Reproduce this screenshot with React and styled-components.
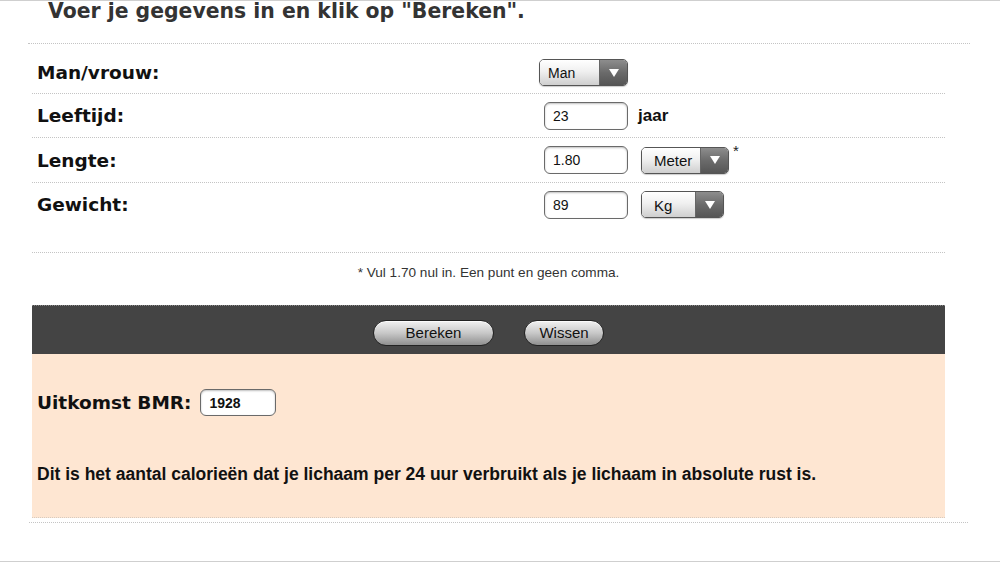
import styled, { createGlobalStyle } from 'styled-components';

const GlobalStyle = createGlobalStyle`
  html, body {
    margin: 0;
    padding: 0;
    background: #fff;
  }
  body {
    font-family: "Liberation Sans", Arial, sans-serif;
    color: #111;
  }
`;

const Page = styled.div`
  box-sizing: border-box;
  width: 1000px;
  height: 562px;
  border-top: 1px solid #cfcfcf;
  border-bottom: 1px solid #cfcfcf;
  overflow: hidden;
  display: flex;
  flex-direction: column;
`;

const Header = styled.div`
  margin-left: 28px;
  width: 942px;
  height: 42px;
  border-bottom: 1px dotted #c4c4c4;
`;

const Title = styled.h1`
  margin: 0;
  padding-left: 20px;
  font-family: "DejaVu Sans", sans-serif;
  font-weight: bold;
  font-size: 20.4px;
  line-height: 20px;
  color: #333;
`;

const Form = styled.div`
  margin-left: 32px;
  width: 913px;
`;

const Row = styled.div`
  display: grid;
  grid-template-columns: 507px 1fr;
  align-items: center;
  height: ${(p) => p.$h || 43}px;
  padding-top: ${(p) => p.$pt || 0}px;
  padding-bottom: ${(p) => p.$pb || 0}px;
  border-bottom: 1px dotted #c4c4c4;
`;

const Label = styled.div`
  padding-left: 5px;
  font-family: "DejaVu Sans", sans-serif;
  font-weight: bold;
  font-size: 18.5px;
  color: #111;
`;

const Controls = styled.div`
  display: flex;
  align-items: center;
  gap: ${(p) => p.$gap || 13}px;
`;

const TextInput = styled.input`
  box-sizing: border-box;
  width: ${(p) => p.$w || 84}px;
  height: ${(p) => p.$hgt || 28}px;
  margin-left: ${(p) => p.$ml || 0}px;
  padding: 0 0 0 8px;
  border: 1px solid #6a6a6a;
  border-radius: 6px;
  background: #fff;
  box-shadow: inset 0 1px 2px rgba(0, 0, 0, 0.25);
  font-family: "Liberation Sans", Arial, sans-serif;
  font-size: 14px;
  font-weight: ${(p) => (p.$bold ? 'bold' : 'normal')};
  color: #111;
  outline: none;
`;

const Select = styled.div`
  box-sizing: border-box;
  display: flex;
  width: ${(p) => p.$w}px;
  height: 27px;
  border: 1px solid #555;
  border-radius: 5px;
  overflow: hidden;
  box-shadow: 0 1px 1px rgba(0, 0, 0, 0.2);
`;

const SelectText = styled.div`
  flex: 1;
  display: flex;
  align-items: center;
  padding-left: ${(p) => p.$pl}px;
  padding-top: 1px;
  background: linear-gradient(#ffffff, #f0f0f0 45%, #cfcfcf);
  font-size: ${(p) => p.$fs}px;
  color: #111;
`;

const SelectArrow = styled.div`
  width: 27px;
  display: flex;
  align-items: center;
  justify-content: center;
  background: linear-gradient(#8d8d8d, #6b6b6b 50%, #555);
  border-left: 1px solid #666;

  &::after {
    content: '';
    width: 0;
    height: 0;
    border-left: 5px solid transparent;
    border-right: 5px solid transparent;
    border-top: 8px solid #fff;
  }
`;

const Unit = styled.span`
  font-weight: bold;
  font-size: 17px;
  color: #111;
`;

const Star = styled.span`
  align-self: flex-start;
  margin: -4px 0 0 -9px;
  font-size: 15px;
  color: #222;
`;

const Note = styled.div`
  height: 52px;
  padding-top: 12px;
  box-sizing: border-box;
  text-align: center;
  font-size: 13.6px;
  line-height: 16px;
  color: #333;
`;

const ActionBar = styled.div`
  height: 48px;
  background: #444;
  border-top: 1px dotted #888;
  display: flex;
  align-items: center;
  justify-content: center;
  gap: 30px;
`;

const PillButton = styled.button`
  box-sizing: border-box;
  width: ${(p) => p.$w}px;
  height: 26px;
  border: 1px solid #222;
  border-radius: 13px;
  background: linear-gradient(#f2f2f2, #c8c8c8 50%, #8f8f8f);
  box-shadow: inset 0 1px 0 rgba(255, 255, 255, 0.7);
  font-family: "Liberation Sans", Arial, sans-serif;
  font-size: 15px;
  color: #111;
  padding: 0;
  margin-top: 5px;
`;

const Result = styled.div`
  box-sizing: border-box;
  height: 164px;
  background: #fee6d2;
  border-bottom: 1px dotted #d8cbbf;
  padding-left: 5px;
  padding-top: 35px;
`;

const ResultRow = styled.div`
  display: flex;
  align-items: center;
  gap: 9px;
`;

const ResultLabel = styled.div`
  font-family: "DejaVu Sans", sans-serif;
  font-weight: bold;
  font-size: 18.5px;
  color: #111;
`;

const Explain = styled.p`
  margin: 48px 0 0;
  font-weight: bold;
  font-size: 17.5px;
  color: #111;
`;

const Footer = styled.div`
  margin: 4px 0 0 29px;
  width: 939px;
  border-top: 1px dotted #c4c4c4;
`;

function FakeSelect({ value, width, pl, fs = 14 }) {
  return (
    <Select $w={width}>
      <SelectText $pl={pl} $fs={fs}>
        {value}
      </SelectText>
      <SelectArrow />
    </Select>
  );
}

export default function App() {
  return (
    <>
      <GlobalStyle />
      <Page>
        <Header>
          <Title>Voer je gegevens in en klik op "Bereken".</Title>
        </Header>
        <Form>
          <Row $h={41} $pt={8}>
            <Label>Man/vrouw:</Label>
            <Controls>
              <FakeSelect value="Man" width={89} pl={8} />
            </Controls>
          </Row>
          <Row>
            <Label>Leeftijd:</Label>
            <Controls $gap={10}>
              <TextInput $ml={5} defaultValue="23" />
              <Unit>jaar</Unit>
            </Controls>
          </Row>
          <Row $h={44}>
            <Label>Lengte:</Label>
            <Controls>
              <TextInput $ml={5} defaultValue="1.80" />
              <FakeSelect value="Meter" width={88} pl={12} fs={15} />
              <Star>*</Star>
            </Controls>
          </Row>
          <Row $pb={26}>
            <Label>Gewicht:</Label>
            <Controls>
              <TextInput $ml={5} defaultValue="89" />
              <FakeSelect value="Kg" width={83} pl={12} fs={15} />
            </Controls>
          </Row>
          <Note>* Vul 1.70 nul in. Een punt en geen comma.</Note>
          <ActionBar>
            <PillButton $w={121}>Bereken</PillButton>
            <PillButton $w={80}>Wissen</PillButton>
          </ActionBar>
          <Result>
            <ResultRow>
              <ResultLabel>Uitkomst BMR:</ResultLabel>
              <TextInput $w={76} $hgt={27} $bold defaultValue="1928" />
            </ResultRow>
            <Explain>
              Dit is het aantal calorieën dat je lichaam per 24 uur verbruikt als je lichaam in absolute rust is.
            </Explain>
          </Result>
        </Form>
        <Footer />
      </Page>
    </>
  );
}
